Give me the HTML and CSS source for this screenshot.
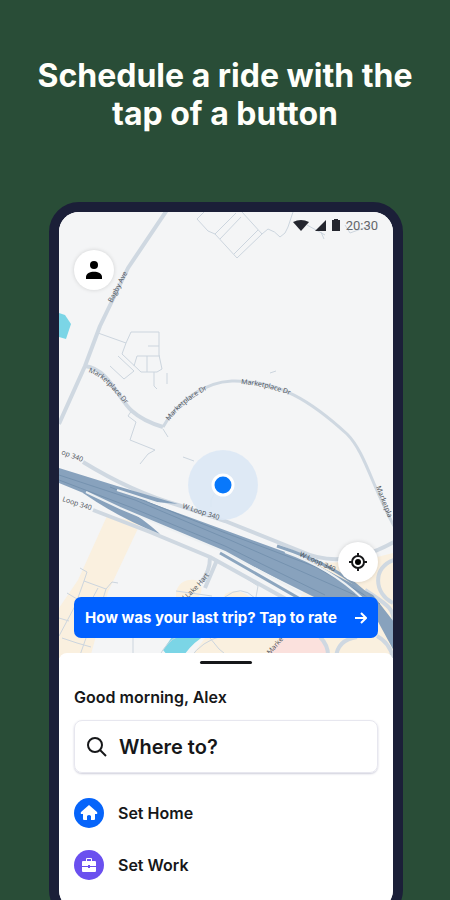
FILE: index.html
```html
<!DOCTYPE html>
<html lang="en">
<head>
    <meta charset="UTF-8">
    <meta name="viewport" content="width=device-width, initial-scale=1.0">
    <title>Schedule a ride</title>
    <link rel="stylesheet" href="styles.css">
</head>
<body>
    <main class="page">
        <h1>Schedule a ride with the<br>tap of a button</h1>

        <div class="phone">
            <section class="map-area">
                <svg class="map" viewBox="59 212 334 446" preserveAspectRatio="xMidYMin slice" aria-hidden="true">
                    <defs>
                        <path id="bagby" d="M112 303 L130 268"/>
                        <path id="market-left" d="M88 372 C104 377 112 390 128 407"/>
                        <path id="market-mid" d="M169 421 Q184 401 210 388"/>
                        <path id="market-top" d="M241 384 Q268 386 298 398"/>
                        <path id="market-right" d="M376 487 L392 528"/>
                        <path id="loop-a" d="M61 454 L90 465"/>
                        <path id="loop-b" d="M62 501 L102 514"/>
                        <path id="loop-c" d="M182 508 L228 523"/>
                        <path id="loop-d" d="M299 556 L342 575"/>
                        <path id="lake" d="M183 602 Q204 586 217 563"/>
                        <path id="rail" d="M270 655 L290 632"/>
                    </defs>

                    <!-- land and water -->
                    <g class="land">
                        <path d="M107 516 L141 522 L108 592 L90 658 L59 658 L59 608 L78 580Z"/>
                        <path d="M176 592 Q180 578 196 580 Q207 588 196 600 H176Z"/>
                        <path d="M225 594 Q237 587 250 597 L303 612 L313 658 H190 L205 638Z"/>
                        <path d="M320 562 Q350 565 393 553 V658 H300 L280 634Z"/>
                    </g>
                    <path class="land-pink" d="M283 636 H322 L330 658 H264Z"/>
                    <path class="water" d="M59 313 L65 315 L71 324 L66 339 L59 337Z"/>
                    <path class="water" d="M163 650 L174 634 H208 Q194 641 184 655 L168 656Z"/>

                    <!-- side streets -->
                    <g class="street">
                        <path d="M204 212 L197 219 L208 231 L215 234 L237 258 L262 234 L242 212 M215 234 L236 213 M220 239 L241 217 M234 254 L258 230 M262 234 L268 229 Q275 231 280 237 Q286 234 288 227 L293 212 M307 225 L325 235 M321 232 L324 239 M345 225 L350 233 L372 225"/>
                        <path d="M98 333 L126 343 M131 332 H159 V355 L162 369 L157 372 H141 L122 354 L126 343 L131 332 M148 346 H159 M134 366 L137 356 H160 M147 356 V372 M118 356 L134 371 L124 379 L110 366 M154 372 V386 L157 389 M167 373 V384 M132 410 L128 416 L136 422 L130 440 L155 450 L148 454 L140 464 M163 429 L168 437 M183 457 L194 461 M216 491 L211 500 V507 M270 373 L276 371"/>
                        <path d="M80 568 L87 572 L84 581 L75 606 L59 636 M84 581 L106 589 L112 582 L118 583 M106 589 L99 612 M98 588 L90 603 M67 593 L77 599 M59 618 L69 621 M62 638 L77 643 L91 647 M86 638 L79 658 M133 634 V658 M176 591 L212 596 M240 574 L258 586 L256 597"/>
                        <path d="M225 597 Q241 584 255 598 M158 658 Q168 640 177 637 M190 658 Q202 641 222 636 M210 638 Q218 650 230 658"/>
                    </g>

                    <!-- main roads -->
                    <g class="road">
                        <path d="M167 210 L128 268 L100 326 L85 366 L59 424"/>
                        <path d="M85 366 C109 369 118 399 132 411 Q143 421 163 427"/>
                        <path class="road-thin" d="M163 427 C177 401 205 382 232 381 C279 380 312 402 347 434 C365 452 372 486 394 526"/>
                        <path d="M83 462 Q132 492 178 505 L225 521 L300 551 Q342 571 394 542"/>
                        <path d="M93 510 L150 532 L210 557 L286 599"/>
                        <path d="M210 557 Q210 572 201 582 M217 560 L205 588"/>
                        <path d="M394 560 C372 567 374 594 393 603 M365 590 C384 603 395 607 394 625 M320 637 Q329 646 328 658 M336 658 Q337 640 357 637 M377 636 Q390 643 393 658"/>
                    </g>

                    <!-- highway -->
                    <path class="highway-fill" d="M59 468 L117 486 L178 504 L145 501 L230 532 L310 561 L373 595 L394 622 V651 L376 618 L314 597 L220 550 L120 508 L59 483Z"/>
                    <path class="highway-fill" d="M83 489 Q126 503 160 534 Q119 518 83 493Z"/>
                    <g class="highway-line">
                        <path d="M59 475 L135 500 L230 540 L355 595"/>
                        <path d="M59 480 L130 507 L225 546 L325 595"/>
                        <path d="M110 487 L145 501 L223 532 L316 567 L380 604"/>
                    </g>
                    <path class="highway-gap" d="M117 490 L160 504 M86 492 L120 508 L225 552 L310 598 M285 552 Q330 568 362 598"/>
                    <path class="ramp" d="M277 546 Q342 567 370 598 M220 553 L302 600"/>

                    <g class="road-label">
                        <text><textPath href="#bagby">Bagby Ave</textPath></text>
                        <text><textPath href="#market-left">Marketplace Dr</textPath></text>
                        <text><textPath href="#market-mid">Marketplace Dr</textPath></text>
                        <text><textPath href="#market-top">Marketplace Dr</textPath></text>
                        <text><textPath href="#market-right">Marketpla</textPath></text>
                        <text><textPath href="#loop-a">op 340</textPath></text>
                        <text><textPath href="#loop-b">Loop 340</textPath></text>
                        <text><textPath href="#loop-d">W Loop 340</textPath></text>
                        <text><textPath href="#lake">d Lake Hart</textPath></text>
                        <text><textPath href="#rail">Marke</textPath></text>
                    </g>

                    <circle class="halo" cx="223" cy="485" r="35"/>
                    <circle class="dot" cx="223" cy="485" r="10"/>
                    <text class="road-label"><textPath href="#loop-c">W Loop 340</textPath></text>
                </svg>

                <div class="status-bar">
                    <svg width="16" height="11" viewBox="0 0 16 11" aria-hidden="true"><path d="M0 2 Q8-2 16 2 L8 11Z"/></svg>
                    <svg width="11" height="11" viewBox="0 0 11 11" aria-hidden="true"><path d="M11 0 V11 H0Z"/></svg>
                    <svg width="8" height="12" viewBox="0 0 8 12" aria-hidden="true"><path d="M0 1 H2 V0 H6 V1 H8 V12 H0Z"/></svg>
                    <span>20:30</span>
                </div>

                <button class="round-button" aria-label="Profile">
                    <svg width="18" height="18" viewBox="0 0 18 18" aria-hidden="true">
                        <circle cx="9" cy="4" r="4"/>
                        <path d="M1 18 V16 C1 9 17 9 17 16 V18Z"/>
                    </svg>
                </button>

                <button class="round-button locate" aria-label="My location">
                    <svg width="18" height="18" viewBox="0 0 18 18" aria-hidden="true">
                        <circle class="ring" cx="9" cy="9" r="6"/>
                        <circle cx="9" cy="9" r="3"/>
                        <path class="ring" d="M9 0 V3 M9 15 V18 M0 9 H3 M15 9 H18"/>
                    </svg>
                </button>

                <button class="banner">
                    <span>How was your last trip? Tap to rate</span>
                    <svg width="12" height="12" viewBox="0 0 12 12" aria-hidden="true"><path d="M0 6 H11 M6 1 L11 6 L6 11"/></svg>
                </button>
            </section>

            <section class="sheet">
                <div class="handle"></div>
                <p class="greeting">Good morning, Alex</p>
                <label class="search">
                    <svg width="20" height="20" viewBox="0 0 20 20" aria-hidden="true"><circle cx="8" cy="8" r="7"/><path d="M13 13 L19 19"/></svg>
                    <input type="text" placeholder="Where to?" aria-label="Where to?">
                </label>
                <button class="place">
                    <span class="place-icon home">
                        <svg width="18" height="18" viewBox="0 0 18 18" aria-hidden="true"><path d="M9 1 L17 8 Q18 10 16 10 H15 V15 Q15 16 14 16 H11 V12 Q9 10 7 12 V16 H4 Q3 16 3 15 V10 H2 Q0 10 1 8Z"/></svg>
                    </span>
                    Set Home
                </button>
                <button class="place">
                    <span class="place-icon work">
                        <svg width="16" height="16" viewBox="0 0 16 16" aria-hidden="true"><path fill-rule="evenodd" d="M5 4 V2 Q5 1 6 1 H10 Q11 1 11 2 V4 H14 Q15 4 15 5 V9 H9 V8 H7 V9 H1 V5 Q1 4 2 4Z M6 4 H10 V2 H6Z M1 10 H7 V11 H9 V10 H15 V14 Q15 15 14 15 H2 Q1 15 1 14Z"/></svg>
                    </span>
                    Set Work
                </button>
            </section>
        </div>
    </main>
</body>
</html>
```
FILE: styles.css
```css
* {
    box-sizing: border-box;
}
body {
    margin: 0;
    background-color: #294d37;
    font-family: Inter, "Liberation Sans", sans-serif;
    color: #161719;
}
button {
    padding: 0;
    border: none;
    font-family: inherit;
    color: inherit;
    cursor: pointer;
}
.page {
    height: 100vh;
    min-height: 900px;
    padding: 57px 47px 0 49px;
    overflow: hidden;
}
h1 {
    margin: 0 -20px 69px -22px;
    font-size: 32px;
    line-height: 38px;
    font-weight: 700;
    text-align: center;
    color: #fffffa;
}
.phone {
    border: 10px solid #1b1f38;
    border-radius: 30px;
    background: #fff;
    overflow: hidden;
}
.map-area {
    position: relative;
    display: flex;
    flex-direction: column;
    align-items: flex-start;
    min-height: 441px;
    padding: 5px 15px 15px;
    background: #f4f5f6;
}
.map {
    position: absolute;
    top: 0;
    left: 0;
    width: 100%;
    height: 446px;
}
.map path {
    fill: none;
    stroke-linejoin: round;
}
.map .land path {
    fill: #faf0df;
}
.map .land-pink {
    fill: #fbe1dd;
}
.map .water {
    fill: #7bd5e6;
}
.street {
    stroke: #ccd5de;
    stroke-width: 1px;
}
.road {
    stroke: #cfd8e1;
    stroke-width: 4px;
}
.road-thin {
    stroke-width: 3px;
}
.map .highway-fill {
    fill: #88a2bd;
}
.highway-line {
    stroke: #7592af;
    stroke-width: 1px;
}
.highway-gap {
    stroke: #edf0f2;
    stroke-width: 2px;
}
.ramp {
    stroke: #8da6bf;
    stroke-width: 3px;
}
.road-label {
    font-family: "Open Sans", sans-serif;
    font-size: 7px;
    fill: #4c5158;
}
.halo {
    fill: #dce8f5;
    fill-opacity: 0.9;
}
.dot {
    fill: #0878fb;
    stroke: #fff;
    stroke-width: 3px;
}
.status-bar {
    position: relative;
    display: flex;
    align-items: center;
    align-self: flex-end;
    gap: 6px;
    height: 16px;
    margin-bottom: 17px;
    font-family: Roboto, sans-serif;
    font-size: 13px;
    color: #65676b;
}
.status-bar svg {
    fill: #24262e;
}
.round-button {
    position: relative;
    display: flex;
    align-items: center;
    justify-content: center;
    width: 40px;
    height: 40px;
    border-radius: 50%;
    background: #fff;
    box-shadow: 0 0 4px rgba(0, 0, 0, 0.15);
}
.locate {
    align-self: flex-end;
    margin-top: auto;
    margin-bottom: 15px;
}
.round-button .ring {
    fill: none;
    stroke: #161719;
    stroke-width: 2px;
}
.banner {
    position: relative;
    display: flex;
    align-items: center;
    justify-content: space-between;
    width: 100%;
    height: 41px;
    padding: 0 11px;
    border-radius: 7px;
    background: #0060ff;
    font-size: 15px;
    font-weight: 700;
    color: #fff;
}
.banner svg {
    fill: none;
    stroke: #fff;
    stroke-width: 2px;
}
.sheet {
    position: relative;
    padding: 8px 15px 8px;
    border-radius: 8px 8px 0 0;
    background: #fff;
}
.handle {
    width: 52px;
    height: 3px;
    margin: 0 auto;
    border-radius: 2px;
    background: #161719;
}
.greeting {
    margin: 23px 0 13px;
    font-size: 16px;
    line-height: 20px;
    font-weight: 600;
}
.search {
    display: flex;
    align-items: center;
    gap: 12px;
    height: 53px;
    margin-bottom: 25px;
    padding: 0 12px;
    border: 1px solid #e7e7ef;
    border-radius: 8px;
    box-shadow: 0 1px 2px rgba(60, 60, 110, 0.25);
}
.search svg {
    flex: none;
    fill: none;
    stroke: #161719;
    stroke-width: 2px;
}
.search input {
    flex: 1;
    min-width: 0;
    padding: 0;
    border: none;
    outline: none;
    background: none;
    font-family: inherit;
    font-size: 20px;
    font-weight: 600;
    color: #161719;
}
.search input::placeholder {
    color: #161719;
    opacity: 1;
}
.place {
    display: flex;
    align-items: center;
    gap: 14px;
    width: 100%;
    height: 30px;
    margin-bottom: 22px;
    background: none;
    font-size: 16px;
    font-weight: 600;
}
.place-icon {
    display: flex;
    align-items: center;
    justify-content: center;
    width: 30px;
    height: 30px;
    border-radius: 50%;
}
.place-icon svg {
    fill: #fff;
}
.home {
    background: #0664fa;
}
.work {
    background: #6a50ef;
}
```
